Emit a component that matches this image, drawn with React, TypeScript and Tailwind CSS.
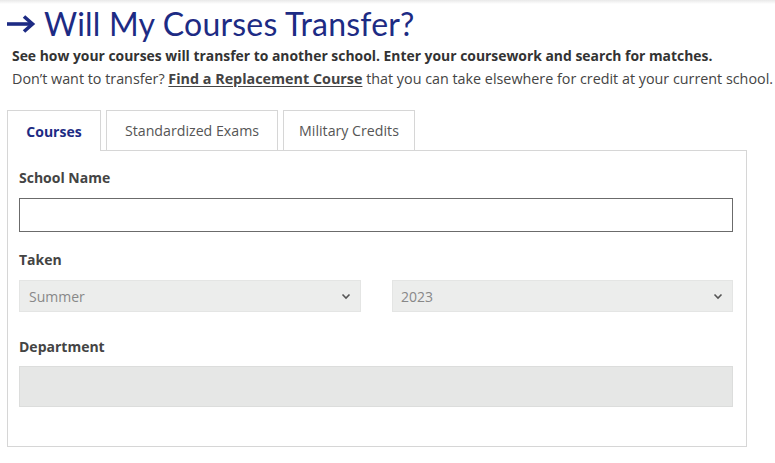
import React from "react";

function Chevron() {
  return (
    <svg width="10" height="7" viewBox="0 0 10 7" className="shrink-0">
      <path d="M1.5 1.5 L5 5 L8.5 1.5" fill="none" stroke="#555" strokeWidth="1.6" />
    </svg>
  );
}

export default function App() {
  const title = { fontFamily: "Lato, 'Liberation Sans', sans-serif" };
  const font = { fontFamily: "'Open Sans', 'Liberation Sans', sans-serif" };
  return (
    <div className="w-[775px] h-[463px] bg-white overflow-hidden text-[#333]" style={font}>
      <div className="h-[4px] bg-gradient-to-b from-[#e9e9e9] to-white" />
      <div className="flex items-center pl-[6px] pt-[2px] h-[38px]">
        <svg width="30" height="20" viewBox="0 0 30 20" className="mr-[8px]">
          <path d="M1 10 H26" stroke="#1d2b84" strokeWidth="3.6" />
          <path d="M18 2.5 L26.5 10 L18 17.5" fill="none" stroke="#1d2b84" strokeWidth="3.6" strokeLinejoin="miter" />
        </svg>
        <h1 className="text-[32px] leading-none text-[#1d2b84] tracking-[0.2px]" style={title}>Will My Courses Transfer?</h1>
      </div>
      <p className="pl-[12px] mt-[3px] text-[13.9px] font-bold leading-[22px] text-[#333]">
        See how your courses will transfer to another school. Enter your coursework and search for matches.
      </p>
      <p className="pl-[12px] text-[14.33px] leading-[24px] text-[#444] whitespace-nowrap">
        Don’t want to transfer? <span className="font-bold underline underline-offset-2">Find a Replacement Course</span> that you can take elsewhere for credit at your current school.
      </p>

      <div className="ml-[7px] mt-[19px] w-[740px]">
        <div className="flex items-end gap-[5px] h-[40px]">
          <div className="h-[41px] w-[94px] border border-b-0 border-[#d6d6d6] bg-white flex items-center justify-center text-[14px] font-bold text-[#1d2b84] relative z-10 -mb-px">
            Courses
          </div>
          <div className="h-[40px] w-[172px] border border-b-0 border-[#d6d6d6] flex items-center justify-center text-[14.2px] text-[#555]">
            Standardized Exams
          </div>
          <div className="h-[40px] w-[132px] border border-b-0 border-[#d6d6d6] flex items-center justify-center text-[14.2px] text-[#555]">
            Military Credits
          </div>
        </div>
        <div className="border border-[#d6d6d6] h-[297px] pl-[11px] pr-[13px] pt-[18px]">
          <div className="text-[14px] font-bold text-[#444] leading-[18px]">School Name</div>
          <div className="mt-[11px] h-[34px] border border-[#6b6b6b] bg-white" />
          <div className="mt-[19px] text-[14px] font-bold text-[#444] leading-[18px]">Taken</div>
          <div className="mt-[11px] flex gap-[31px]">
            <div className="w-[342px] h-[32px] bg-[#ecedec] border border-[#e4e5e4] flex items-center justify-between pl-[9px] pr-[9px] text-[14px] text-[#888]">
              <span>Summer</span>
              <Chevron />
            </div>
            <div className="w-[341px] h-[32px] bg-[#ecedec] border border-[#e4e5e4] flex items-center justify-between pl-[8px] pr-[9px] text-[14px] text-[#888]">
              <span>2023</span>
              <Chevron />
            </div>
          </div>
          <div className="mt-[26px] text-[14px] font-bold text-[#444] leading-[18px]">Department</div>
          <div className="mt-[10px] h-[41px] bg-[#e6e7e6] border border-[#dcdddc]" />
        </div>
      </div>
    </div>
  );
}
